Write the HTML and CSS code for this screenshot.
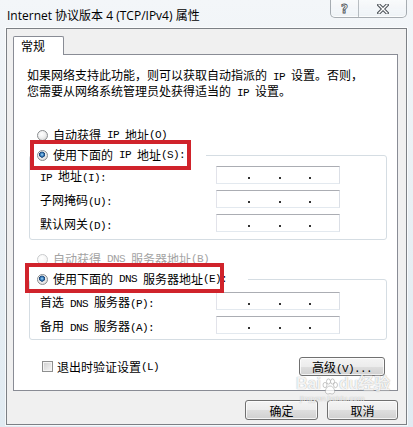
FILE: index.html
```html
<!DOCTYPE html>
<html lang="zh-CN">
<head>
  <meta charset="UTF-8" />
  <meta name="viewport" content="width=device-width, initial-scale=1.0" />
  <title>Internet 协议版本 4 (TCP/IPv4) 属性</title>
  <link rel="stylesheet" href="styles.css">
</head>

<body>
  <div class="window">
    <div class="titlebar">
      <span class="title">Internet 协议版本 4 (TCP/IPv4) 属性</span>
      <div class="caption">
        <span class="capBtn help">?</span>
        <span class="capBtn close">
          <svg width="12" height="10" viewBox="0 0 12 10">
            <path d="M2 1 L10 9 M10 1 L2 9" stroke="#4d5359" stroke-width="3.4" stroke-linecap="square" fill="none"/>
            <path d="M2 1 L10 9 M10 1 L2 9" stroke="#fff" stroke-width="1.3" stroke-linecap="square" fill="none"/>
          </svg>
        </span>
      </div>
    </div>

    <div class="client">
      <div class="tabs"><span class="tab">常规</span></div>

      <div class="page">
        <p class="intro">如果网络支持此功能，则可以获取自动指派的<span class="m"> IP </span>设置。否则，<br>您需要从网络系统管理员处获得适当的<span class="m"> IP </span>设置。</p>

        <label class="radio autoIp"><input type="radio" name="ip">自动获得<span class="m"> IP </span>地址<span class="m">(O)</span></label>

        <fieldset class="group ipGroup">
          <legend>
            <label class="radio"><input type="radio" name="ip" checked>使用下面的<span class="m"> IP </span>地址<span class="m">(S):</span></label>
            <span class="mark"></span>
          </legend>
          <div class="rows">
            <span><span class="m">IP </span>地址<span class="m">(I):</span></span>
            <div class="ip"><i></i><i></i><i></i></div>
            <span>子网掩码<span class="m">(U):</span></span>
            <div class="ip"><i></i><i></i><i></i></div>
            <span>默认网关<span class="m">(D):</span></span>
            <div class="ip"><i></i><i></i><i></i></div>
          </div>
        </fieldset>

        <label class="radio autoDns off"><input type="radio" name="dns" disabled>自动获得<span class="m"> DNS </span>服务器地址<span class="m">(B)</span></label>

        <fieldset class="group dnsGroup">
          <legend>
            <label class="radio"><input type="radio" name="dns" checked>使用下面的<span class="m"> DNS </span>服务器地址<span class="m">(E):</span></label>
            <span class="mark"></span>
          </legend>
          <div class="rows">
            <span>首选<span class="m"> DNS </span>服务器<span class="m">(P):</span></span>
            <div class="ip"><i></i><i></i><i></i></div>
            <span>备用<span class="m"> DNS </span>服务器<span class="m">(A):</span></span>
            <div class="ip"><i></i><i></i><i></i></div>
          </div>
        </fieldset>

        <div class="options">
          <label class="check"><input type="checkbox">退出时验证设置<span class="m">(L)</span></label>
          <button class="btn advanced">高级<span class="m">(V)...</span></button>
        </div>
      </div>

      <div class="actions">
        <button class="btn ok">确定</button>
        <button class="btn cancel">取消</button>
      </div>
    </div>

    <!-- watermark left on the original screenshot -->
    <div class="watermark">
      <span class="wmLogo">Bai<svg width="18" height="18" viewBox="0 0 18 18">
        <g fill="rgba(255,255,255,.9)" stroke="rgba(140,140,140,.7)" stroke-width=".8">
          <ellipse cx="4" cy="7" rx="2" ry="2.6"/>
          <ellipse cx="7.5" cy="3.5" rx="2" ry="2.6"/>
          <ellipse cx="11.5" cy="3.5" rx="2" ry="2.6"/>
          <ellipse cx="14.5" cy="7" rx="2" ry="2.6"/>
          <path d="M9 8 C5 8 3 14 5.5 15.5 C7 16.5 8 15.5 9 15.5 C10 15.5 11 16.5 12.5 15.5 C15 14 13 8 9 8 Z"/>
        </g>
      </svg>du经验</span>
      <span class="wmUrl">jingyan.baidu.com</span>
    </div>
  </div>
</body>
</html>
```

FILE: styles.css
```css
* {
  box-sizing: border-box;
  margin: 0;
  padding: 0;
}

body {
  width: 413px;
  height: 427px;
  overflow: hidden;
  font-family: "Noto Sans CJK SC", sans-serif;
  font-size: 12px;
  color: #000;
  background: linear-gradient(180deg, #f3f6f9 0%, #eaf0f4 45%, #e1ebf2 100%);
}

/* half-width latin, like the old bitmap font */
.m {
  font-family: "Liberation Mono", monospace;
  font-size: 11px;
  letter-spacing: -0.6px;
  white-space: pre;
}

.window {
  position: relative;
  height: 427px;
}

.titlebar {
  display: flex;
  align-items: flex-start;
  height: 28px;
}

.title {
  margin: 6px 0 0 7px;
  font-family: "Open Sans", "Noto Sans CJK SC", sans-serif;
  font-size: 12px;
  line-height: 19px;
}

.caption {
  display: flex;
  height: 18px;
  margin-left: auto;
  margin-right: 6px;
  border: 1px solid rgba(70, 80, 90, 0.45);
  border-top: none;
  border-radius: 0 0 5px 5px;
  background: linear-gradient(rgba(255, 255, 255, 0.5), rgba(236, 241, 245, 0.7));
  box-shadow: inset 0 -1px 0 rgba(255, 255, 255, 0.8);
}

.capBtn {
  display: flex;
  align-items: center;
  justify-content: center;
}

.help {
  width: 28px;
  border-right: 1px solid rgba(70, 80, 90, 0.35);
  font-family: "DejaVu Sans", sans-serif;
  font-weight: bold;
  font-size: 12px;
  color: #fff;
  -webkit-text-stroke: 0.8px #4d5359;
}

.close {
  width: 47px;
}

.client {
  width: 401px;
  margin-left: 6px;
  padding: 7px 8px 4px 6px;
  background: #f0f0f0;
  border: 1px solid #7c8085;
  box-shadow: 0 0 0 1px rgba(255, 255, 255, 0.7);
}

.tabs {
  display: flex;
  height: 18px;
}

.tab {
  position: relative;
  z-index: 1;
  width: 51px;
  height: 19px;
  padding-left: 7px;
  line-height: 17px;
  background: #fff;
  border: 1px solid #898c95;
  border-bottom: none;
  border-radius: 2px 2px 0 0;
}

.page {
  background: #fff;
  border: 1px solid #898c95;
  padding: 13px 0 14px 0;
}

.intro {
  margin-left: 13px;
  line-height: 14px;
}

.radio {
  display: flex;
  align-items: center;
  height: 16px;
  line-height: 16px;
  white-space: nowrap;
}

input[type=radio] {
  appearance: none;
  flex: none;
  width: 11px;
  height: 11px;
  margin-right: 5px;
  border-radius: 50%;
  border: 1px solid #8a8d90;
  background: radial-gradient(circle at 40% 35%, #fff 0, #f2f2f2 40%, #cfcfcf 100%);
}

input[type=radio]:checked {
  background:
    radial-gradient(circle at 45% 40%, #a9dcf7 0, #3b7fbf 1.6px, #173f6e 2.8px, transparent 3.3px),
    radial-gradient(circle at 40% 35%, #fff 0, #f2f2f2 40%, #cfcfcf 100%);
}

input[type=radio]:disabled {
  border-color: #c9cbcd;
  background: radial-gradient(circle at 40% 35%, #fff 0, #eeeeee 100%);
}

.autoIp {
  margin: 27px 0 0 23px;
}

.autoDns {
  margin: 11px 0 0 23px;
}

.off {
  color: #a3a3a3;
}

.group {
  margin: 4px 10px 0 15px;
  padding: 0 0 7px 0;
  border: 1px solid #d5dde3;
  border-radius: 3px;
}

.group legend {
  position: relative;
  padding: 0 21px 0 7px;
}

.mark {
  position: absolute;
  height: 30px;
  border: 4px solid #d0232b;
}

.ipGroup .mark {
  left: 0;
  top: -7px;
  width: 161px;
}

.dnsGroup {
  margin-top: 4px;
  padding-bottom: 5px;
}

.dnsGroup .mark {
  left: -5px;
  top: -8px;
  width: 199px;
}

.rows {
  display: grid;
  grid-template-columns: 176px 124px;
  grid-auto-rows: 18px;
  row-gap: 6px;
  align-items: center;
  padding: 3px 0 0 10px;
  white-space: nowrap;
}

.dnsGroup .rows {
  padding-top: 5px;
}

.ip {
  display: flex;
  justify-content: space-evenly;
  align-items: flex-end;
  height: 18px;
  padding: 0 0 4px 3px;
  background: #fff;
  border: 1px solid;
  border-color: #abadb3 #dbdfe6 #e3e9ef #e2e3ea;
}

.ip i {
  width: 2px;
  height: 2px;
  background: #333;
}

.options {
  display: flex;
  justify-content: space-between;
  align-items: center;
  height: 19px;
  margin: 17px 12px 0 28px;
}

.check {
  display: flex;
  align-items: center;
}

input[type=checkbox] {
  appearance: none;
  width: 11px;
  height: 11px;
  margin-right: 4px;
  border: 1px solid #8e8f8f;
  background: linear-gradient(135deg, #cfcfcf, #f7f7f7);
  box-shadow: inset 0 0 0 1px #f4f4f4;
}

.btn {
  height: 19px;
  font-family: "Noto Sans CJK SC", sans-serif;
  font-size: 12px;
  line-height: 17px;
  color: #000;
  border: 1px solid #707070;
  border-radius: 3px;
  background: linear-gradient(#f4f4f4 0%, #ececec 50%, #dedede 51%, #d0d0d0 100%);
  box-shadow: inset 0 0 0 1px rgba(255, 255, 255, 0.75);
}

.advanced {
  width: 86px;
}

.actions {
  display: flex;
  justify-content: flex-end;
  gap: 9px;
  margin-top: 9px;
}

.actions .btn {
  height: 20px;
}

.ok {
  width: 73px;
}

.cancel {
  width: 71px;
}

.watermark {
  position: absolute;
  left: 296px;
  top: 372px;
  display: flex;
  flex-direction: column;
  align-items: flex-start;
  opacity: 0.85;
  pointer-events: none;
}

.wmLogo {
  display: flex;
  align-items: flex-end;
  font-family: "Liberation Sans", Arial, sans-serif;
  font-weight: bold;
  font-size: 16px;
  line-height: 24px;
  color: rgba(255, 255, 255, 0.9);
  text-shadow: 0 0 1px rgba(120, 120, 120, 0.9);
}

.wmUrl {
  margin: -2px 0 0 4px;
  font-family: "Liberation Sans", Arial, sans-serif;
  font-size: 8px;
  color: rgba(255, 255, 255, 0.9);
  text-shadow: 0 0 1px rgba(120, 120, 120, 0.8);
}
```
